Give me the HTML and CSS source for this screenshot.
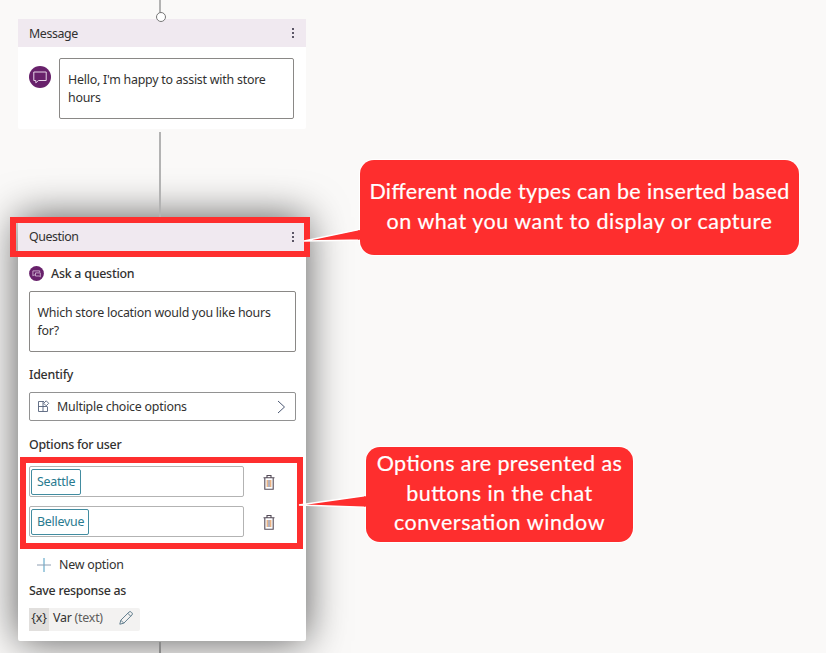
FILE: index.html
```html
<!DOCTYPE html>
<html lang="en">
<head>
<meta charset="utf-8">
<title>Authoring canvas</title>
<link rel="stylesheet" href="styles.css">
</head>
<body>
<main class="canvas">
  <div class="link link-top"></div>
  <div class="link link-middle"></div>
  <div class="link link-bottom"></div>

  <section class="node message">
    <header class="node-head"><span class="t-message">Message</span><svg class="more" viewBox="0 0 4 14"><path d="M1 2h2v2H1zM1 6h2v2H1zM1 10h2v2H1z"/></svg></header>
    <div class="message-body">
      <svg class="chat" viewBox="0 0 22 22"><circle cx="11" cy="11" r="11" fill="#68216b"/><path d="M4.8 6h12.4v8.5H9.5l-2.7 2.3v-2.3h-2z" fill="none" stroke="#e6d5e8"/></svg>
      <div class="textbox"><span class="t-hello">Hello, I'm happy to assist with store</span><br><span>hours</span></div>
    </div>
  </section>
  <div class="port"></div>

  <section class="node question">
    <header class="node-head"><span class="t-question">Question</span><svg class="more" viewBox="0 0 4 14"><path d="M1 2h2v2H1zM1 6h2v2H1zM1 10h2v2H1z"/></svg></header>
    <div class="question-body">
      <h2 class="ask"><svg viewBox="0 0 15 15"><circle cx="7.5" cy="7.5" r="7.4" fill="#68216b"/><path d="M6 9H4.8l-.9.9V4.9h6.8v1.3M6.5 6.9h4.8v4l-1-.9H6.5z" fill="none" stroke="#d9c2dc" stroke-width=".8"/></svg><span class="t-ask">Ask a question</span></h2>
      <div class="textbox"><span class="t-which">Which store location would you like hours</span><br><span>for?</span></div>
      <h2 class="identify"><span class="t-identify">Identify</span></h2>
      <div class="select">
        <svg class="grid-icon" viewBox="0 0 13 13"><path d="M7 1.500H1.500v10h9V7M1.500 6.500h6M6 1.500v10M6 6.500h4.500M9.200.8l2.500 2.500-2.500 2.500-2.500-2.500z" fill="none" stroke="#55627c" stroke-width=".9"/></svg>
        <span class="t-multiple">Multiple choice options</span>
        <svg class="chevron" viewBox="0 0 9 14"><path d="M1 1l6.500 6L1 13" fill="none" stroke="#4b5873"/></svg>
      </div>
      <h2 class="options"><span class="t-options">Options for user</span></h2>
      <div class="option"><div class="input"><span class="tag tag-seattle"><span class="t-seattle">Seattle</span></span></div><svg class="bin" viewBox="0 0 12 15"><path d="M.5 2.800h11M4 2.500v-2h4v2M1.800 3v11.300h8.400V3" fill="none" stroke="#544b58" stroke-width="1.1"/><path d="M4.200 5v7" stroke="#de9250"/><path d="M6 5v7" stroke="#696278"/><path d="M7.800 5v7" stroke="#de9250"/></svg></div>
      <div class="option"><div class="input"><span class="tag tag-bellevue"><span class="t-bellevue">Bellevue</span></span></div><svg class="bin" viewBox="0 0 12 15"><path d="M.5 2.800h11M4 2.500v-2h4v2M1.800 3v11.300h8.400V3" fill="none" stroke="#544b58" stroke-width="1.1"/><path d="M4.200 5v7" stroke="#de9250"/><path d="M6 5v7" stroke="#696278"/><path d="M7.800 5v7" stroke="#de9250"/></svg></div>
      <div class="new"><svg viewBox="0 0 14 14"><path d="M7 0v14" stroke="#4a9bc0"/><path d="M0 7h14" stroke="#8e9eb2"/></svg><span class="t-new">New option</span></div>
      <h2 class="save"><span class="t-save">Save response as</span></h2>
      <div class="variable"><span class="braces">{x}</span><span class="t-var">Var <i>(text)</i></span><svg viewBox="0 0 14 14"><path d="M.8 13.200l1-4L10 1.100a1.500 1.500 0 0 1 2.200 0l.7.7a1.500 1.500 0 0 1 0 2.200L4.800 12.200zM8.800 2.300l2.900 2.900M1.800 9.200l3 3" fill="none" stroke="#537384" stroke-width=".9"/></svg></div>
    </div>
  </section>

  <div class="outline outline-head"></div>
  <div class="outline outline-options"></div>

  <svg class="tails" viewBox="0 0 826 653"><path d="M365 226v14L304 241 360 229.500z"/><path d="M371 494v13.500L299 505 366 495.500z"/></svg>
  <aside class="callout callout-types"><span class="c1">Different node types can be inserted based</span><span class="c2">on what you want to display or capture</span></aside>
  <aside class="callout callout-buttons"><span class="c3">Options are presented as</span><span class="c4">buttons in the chat</span><span class="c5">conversation window</span></aside>
  <svg class="tails" viewBox="0 0 826 653"><path class="join" d="M358 230.600l4-1v10l-4 .1zM364 496.500l4-.5v10.700l-4-.1z"/></svg>
</main>
</body>
</html>
```
FILE: styles.css
```css
* { box-sizing: border-box; }
body { margin: 0; }
svg { display: block; flex: none; }
.canvas {
  position: relative;
  width: 826px;
  height: 653px;
  overflow: hidden;
  background: #faf9f8;
  color: #323130;
  font: 12.4px/18px "Noto Sans", "Open Sans", sans-serif;
  letter-spacing: -.23px;
  white-space: nowrap;
}
.canvas span { white-space: nowrap; }

.link { position: absolute; left: 159px; width: 2px; background: #b3b3b3; }
.link-top { top: 0; height: 14px; }
.link-middle { top: 132px; height: 86px; z-index: 2; }
.link-bottom { top: 642px; height: 11px; z-index: 2; background: #898989; }
.port {
  position: absolute;
  left: 156px;
  top: 12px;
  width: 10px;
  height: 10px;
  border: 1px solid #777;
  border-radius: 50%;
  background: #fff;
  z-index: 2;
}

.node { position: absolute; left: 18px; width: 288px; border-radius: 2px; background: #fff; }
.message { top: 19px; height: 110px; }
.question { top: 217px; height: 424px; box-shadow: 0 0 40px rgba(0, 0, 0, .65); }
.node-head {
  display: flex;
  justify-content: space-between;
  align-items: center;
  height: 28px;
  padding: 0 11px;
  background: #f0e9f0;
}
.message .t-message { padding-top: 1px; letter-spacing: -.4px; }
.question .node-head { height: 40px; }
.t-question { letter-spacing: -.45px; }
.more { width: 4px; height: 14px; fill: #5b5666; }

.message-body { display: flex; gap: 8px; padding: 11px 12px 0 11px; }
.chat { width: 22px; height: 22px; margin-top: 8px; }
.textbox { border: 1px solid #8a8886; border-radius: 2px; height: 61px; padding: 12px 8px 0; }
.message .textbox { flex: 1; }
.question .textbox { padding-left: 7.500px; }

.question-body { padding: 0 10px 0 11px; }
h2 { margin: 0; font-size: 12.4px; line-height: 18px; font-weight: 500; }
.ask { display: flex; align-items: center; gap: 7px; height: 34px; }
.ask svg { width: 15px; height: 15px; margin-top: -2px; }
.identify { margin-top: 14px; }
.select {
  display: flex;
  align-items: center;
  gap: 7px;
  height: 29px;
  margin-top: 8px;
  padding: 0 9px 0 7px;
  border: 1px solid #929292;
  border-radius: 2px;
}
.grid-icon { width: 13px; height: 13px; }
.chevron { width: 9px; height: 14px; margin-left: auto; }
.options { margin: 15px 0 12px; }
.t-options, .t-save { letter-spacing: -.27px; }
.option { display: flex; align-items: center; gap: 19px; height: 31px; margin-bottom: 9px; }
.input {
  display: flex;
  align-items: center;
  width: 215px;
  height: 31px;
  padding-left: 1px;
  border: 1px solid #b3b3b3;
  border-radius: 2px;
}
.tag {
  display: flex;
  align-items: center;
  height: 26px;
  padding: 1px 0 0 5px;
  border: 1px solid #428ca0;
  border-radius: 2px;
  color: #287a8f;
}
.tag-seattle { width: 50px; }
.tag-bellevue { width: 58px; }
.bin { width: 12px; height: 15px; margin-top: 1px; }
.new { display: flex; align-items: center; gap: 8px; height: 18px; margin-top: 19px; padding-left: 8px; }
.new svg { width: 14px; height: 14px; }
.save { margin-top: 8px; }
.variable { display: flex; align-items: center; width: 111px; height: 23px; margin-top: 8px; background: #f3f2f1; border-radius: 2px; }
.variable i { font-style: normal; color: #605e5c; }
.braces { width: 20px; height: 23px; margin-right: 4px; line-height: 19px; text-align: center; background: #e1dfdd; }
.t-var { padding-bottom: 3px; }
.variable svg { width: 14px; height: 14px; margin-left: auto; margin-right: 7px; margin-bottom: 3px; }

.outline { position: absolute; border: 6px solid #fe2e2e; z-index: 3; }
.outline-head { left: 10px; top: 217px; width: 300px; height: 40px; }
.outline-options { left: 20px; top: 457px; width: 283px; height: 92px; }

.tails { position: absolute; inset: 0; width: 826px; height: 653px; z-index: 4; fill: #fe2e2e; stroke: #fff; stroke-width: 1.3; }
.join { stroke: none; }
.callout {
  position: absolute;
  display: flex;
  flex-direction: column;
  align-items: center;
  justify-content: center;
  border-radius: 14px;
  background: #fe2e2e;
  box-shadow: 0 0 0 1px #fff;
  color: #fff;
  font: 21.500px/29.500px Lato, sans-serif;
  font-feature-settings: "liga" 1;
  -webkit-text-stroke: .2px #fff;
  z-index: 4;
}
.callout-types { left: 360px; top: 160px; width: 439px; height: 95px; padding-bottom: 2px; }
.callout-buttons { left: 366px; top: 447px; width: 267px; height: 95px; padding-bottom: 2px; }
.c1 { letter-spacing: .36px; }
.c2 { letter-spacing: .53px; }
.c3 { letter-spacing: .42px; }
.c4 { letter-spacing: .5px; }
.c5 { letter-spacing: .55px; }
```
